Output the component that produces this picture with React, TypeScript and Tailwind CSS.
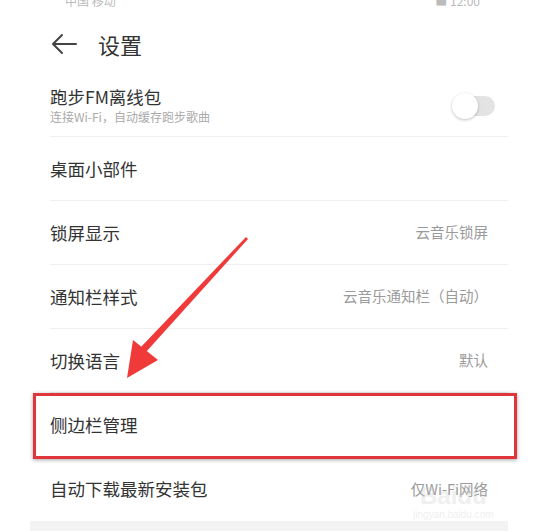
import React from "react";

const font = { fontFamily: '"Noto Sans CJK SC", "Noto Sans", sans-serif' };

function Row({ title, value, children, last }: { title: string; value?: string; children?: React.ReactNode; last?: boolean }) {
  return (
    <div className={`flex items-center justify-between h-[64px] ${last ? "" : "border-b border-[#efefef]"}`}>
      <span className="text-[17.5px] text-[#333] leading-none">{title}</span>
      {value && <span className="text-[14.5px] text-[#9a9a9a] pr-[20px] leading-none">{value}</span>}
      {children}
    </div>
  );
}

export default function App() {
  return (
    <div className="relative w-[545px] h-[531px] bg-white overflow-hidden" style={font}>
      {/* status bar remnants */}
      <div className="flex justify-between h-[6px] px-[65px] -mt-[8px] text-[12px] text-[#bbb]">
        <span>中国 移动</span>
        <span>■ 12:00</span>
      </div>
      {/* header */}
      <div className="flex items-center h-[62px] pl-[50px] gap-[20px] mt-[15px]">
        <svg width="28" height="22" viewBox="0 0 28 22" fill="none" stroke="#444" strokeWidth="2" strokeLinecap="round" strokeLinejoin="round">
          <path d="M26 11H3M12 2L3 11l9 9" />
        </svg>
        <span className="text-[22px] text-[#333] leading-none">设置</span>
      </div>
      <div className="pl-[50px] pr-[37px]">
        <div className="flex items-center justify-between h-[62px] border-b border-[#efefef]">
          <div className="flex flex-col gap-[6px]">
            <span className="text-[17.5px] text-[#333] leading-none">跑步FM离线包</span>
            <span className="text-[12px] text-[#aaa] leading-none">连接Wi-Fi，自动缓存跑步歌曲</span>
          </div>
          <div className="relative w-[40px] h-[20px] rounded-full bg-[#e3e3e3] mr-[13px]">
            <div className="absolute -left-[3px] -top-[3px] w-[26px] h-[26px] rounded-full bg-white shadow-[0_1px_3px_rgba(0,0,0,0.25)]" />
          </div>
        </div>
        <Row title="桌面小部件" />
        <Row title="锁屏显示" value="云音乐锁屏" />
        <Row title="通知栏样式" value="云音乐通知栏（自动）" />
        <Row title="切换语言" value="默认" />
        <div className="relative">
          <Row title="侧边栏管理" />
          <div className="absolute -left-[17px] -right-[9px] top-[0px] h-[66px] border-[3px] border-[#e0353a] shadow-[0_1px_4px_rgba(0,0,0,0.35)]" />
        </div>
        <Row title="自动下载最新安装包" value="仅Wi-Fi网络" last />
      </div>
      <div className="ml-[30px] mr-[37px] h-[12px] bg-[#f3f3f3]" />
      {/* watermark */}
      <div className="absolute left-[413px] top-[484px] flex flex-col items-center opacity-30 pointer-events-none">
        <span className="text-[24px] font-bold text-[#ccc] leading-none" style={{ fontFamily: '"Liberation Sans", sans-serif' }}>Baidu</span>
        <span className="text-[10px] text-[#ccc] leading-none mt-[2px]" style={{ fontFamily: '"Liberation Sans", sans-serif' }}>jingyan.baidu.com</span>
      </div>
      {/* red arrow */}
      <svg className="absolute left-0 top-0 pointer-events-none" width="545" height="531">
        <path d="M246 237 L248 239 L146 352 L140 348 Z" fill="#f03a3a" />
        <path d="M127 378 L133 340 L158 360 Z" fill="#f03a3a" />
      </svg>
    </div>
  );
}
